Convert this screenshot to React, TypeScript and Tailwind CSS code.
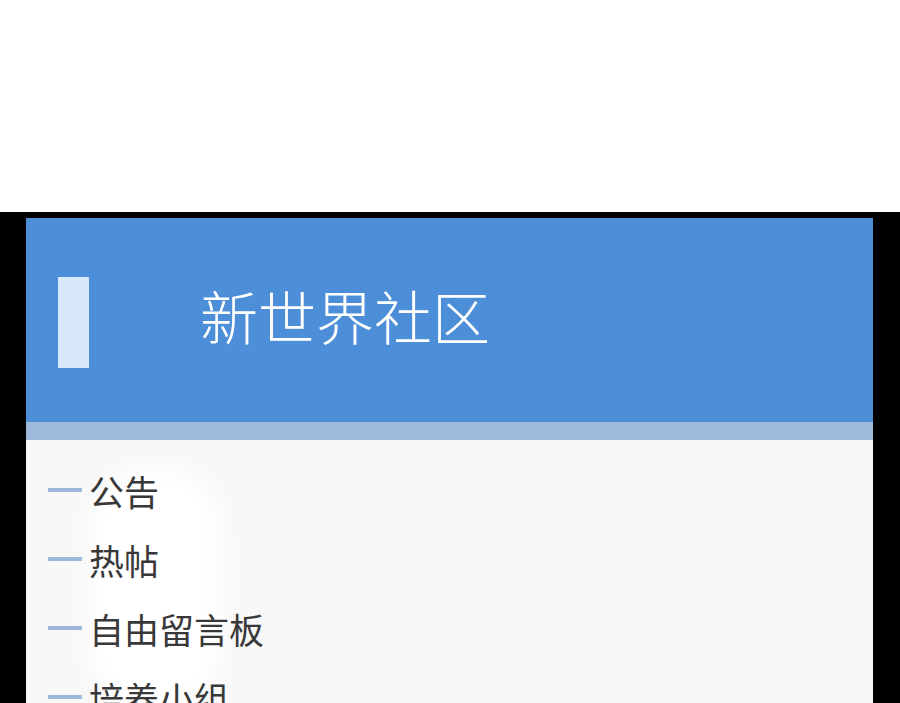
const menu = ['公告', '热帖', '自由留言板', '培养小组'];

export default function App() {
  return (
    <div className="w-[900px] h-[703px] overflow-hidden bg-white flex flex-col" style={{ fontFamily: '"Noto Sans CJK SC", "Noto Sans", sans-serif' }}>
      <div className="h-[212px] shrink-0 bg-white" />
      <div className="flex-1 bg-black pt-[6px] pl-[26px] pr-[27px] flex">
        <div className="flex-1 flex flex-col bg-[#f8f8f8]">
          {/* header */}
          <div className="h-[204px] shrink-0 bg-[#4d8ed8] flex items-center pl-[32px]">
            <div className="w-[31px] h-[91px] bg-[#d8e9fc] mt-[4px]" />
            <h1 className="ml-[111px] text-[58px] leading-none text-white font-light mt-[-10px]">新世界社区</h1>
          </div>
          <div className="h-[18px] shrink-0 bg-[#9ebadb]" />

          {/* menu list */}
          <div className="relative flex-1 overflow-hidden">
            <div className="absolute left-[64px] top-[28px] w-[130px] h-[240px] rounded-[60px] bg-white blur-md" />
            <ul className="relative flex flex-col gap-[33px] pt-[32px] pl-[22px]">
              {menu.map((item) => (
                <li key={item} className="flex items-center h-[36px]">
                  <span className="w-[34px] h-[4px] bg-[#9db8da]" />
                  <span className="ml-[7px] text-[35px] leading-none text-[#383838]">{item}</span>
                </li>
              ))}
            </ul>
          </div>
        </div>
      </div>
    </div>
  );
}
